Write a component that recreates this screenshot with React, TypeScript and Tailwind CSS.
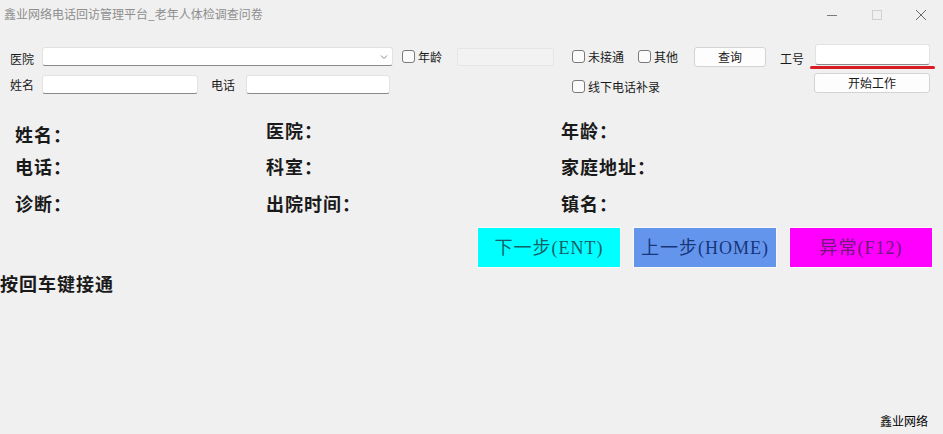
import React from "react";

const ui = { fontFamily: '"Noto Sans CJK SC", "Noto Sans", sans-serif' };
const serif = { fontFamily: '"Liberation Serif", "Noto Sans CJK SC", serif' };

function Check() {
  return <div className="w-[13px] h-[13px] shrink-0 rounded-[3px] border border-[#7a7a7a] bg-[#fbfbfb]" />;
}

function Input({ w }: { w: string }) {
  return (
    <div className={`${w} h-[19px] shrink-0 rounded-[3px] border border-[#e2e2e2] border-b-[#8a8a8a] bg-white`} />
  );
}

export default function App() {
  return (
    <div className="w-[943px] h-[434px] bg-[#f0f0f0] flex flex-col overflow-hidden text-[#1a1a1a]" style={ui}>
      {/* title bar */}
      <div className="h-[30px] flex items-center shrink-0">
        <div className="pl-[4px] text-[12px] text-[#8e8e8e] leading-none pb-[2px]">鑫业网络电话回访管理平台_老年人体检调查问卷</div>
        <div className="ml-auto flex items-center">
          <div className="w-[45px] h-[30px] flex items-center justify-center">
            <svg width="12" height="12" viewBox="0 0 12 12"><path d="M1 6.5h10" stroke="#7a7a7a" strokeWidth="1" /></svg>
          </div>
          <div className="w-[45px] h-[30px] flex items-center justify-center">
            <svg width="12" height="12" viewBox="0 0 12 12"><rect x="1.5" y="1.5" width="9" height="9" fill="none" stroke="#d0d0d0" strokeWidth="1" /></svg>
          </div>
          <div className="w-[44px] h-[30px] flex items-center justify-center">
            <svg width="12" height="12" viewBox="0 0 12 12"><path d="M1 1l10 10M11 1L1 11" stroke="#6a6a6a" strokeWidth="1" /></svg>
          </div>
        </div>
      </div>

      {/* row 1 */}
      <div className="mt-[14px] h-[24px] flex items-start text-[12px] leading-none shrink-0">
        <div className="w-[42px] pl-[10px] mt-[9px]">医院</div>
        <div className="w-[351px] h-[19px] mt-[3px] shrink-0 rounded-[3px] border border-[#e2e2e2] border-b-[#8a8a8a] bg-white flex items-center justify-end pr-[3px]">
          <svg width="10" height="10" viewBox="0 0 10 10"><path d="M2 3.5l3 3 3-3" fill="none" stroke="#8a8a8a" strokeWidth="1" /></svg>
        </div>
        <div className="ml-[9px] mt-[6px] flex items-center gap-[3px]"><Check /><span>年龄</span></div>
        <div className="ml-[15px] mt-[4px] w-[97px] h-[18px] shrink-0 rounded-[2px] border border-[#e6e6e6] bg-[#f2f2f2]" />
        <div className="ml-[18px] mt-[6px] flex items-center gap-[3px]"><Check /><span>未接通</span></div>
        <div className="ml-[14px] mt-[6px] flex items-center gap-[3px]"><Check /><span>其他</span></div>
        <div className="ml-[16px] mt-[3px] w-[72px] h-[20px] shrink-0 rounded-[3px] border border-[#d3d3d3] bg-[#fdfdfd] flex items-center justify-center">查询</div>
        <div className="ml-[14px] mt-[9px] w-[35px]">工号</div>
        <div className="w-[115px] flex flex-col items-start">
          <div className="w-[115px] h-[21px] shrink-0 rounded-[3px] border border-[#e2e2e2] border-b-[#8a8a8a] bg-white" />
          <div className="w-[125px] h-[3px] mt-[1px] -ml-[5px] rounded-full bg-[#d81e24]" />
        </div>
      </div>

      {/* row 2 */}
      <div className="mt-[5px] h-[20px] flex items-start text-[12px] leading-none shrink-0">
        <div className="w-[42px] pl-[10px] mt-[6px]">姓名</div>
        <div className="mt-[2px]"><Input w="w-[156px]" /></div>
        <div className="ml-[13px] w-[35px] mt-[6px]">电话</div>
        <div className="mt-[2px]"><Input w="w-[144px]" /></div>
        <div className="ml-[182px] mt-[7px] flex items-center gap-[3px]"><Check /><span>线下电话补录</span></div>
        <div className="ml-[154px] w-[116px] h-[20px] shrink-0 rounded-[3px] border border-[#d3d3d3] bg-[#fdfdfd] flex items-center justify-center">开始工作</div>
      </div>

      {/* info grid */}
      <div className="mt-[27px] grid grid-cols-[251px_295px_1fr] items-start gap-y-[12px] pl-[15px] text-[18px] font-bold leading-[24px] tracking-[1px] shrink-0" style={serif}>
        <div className="translate-y-[4px]">姓名：</div>
        <div>医院：</div>
        <div>年龄：</div>
        <div>电话：</div>
        <div>科室：</div>
        <div>家庭地址：</div>
        <div className="mt-[1px]">诊断：</div>
        <div className="mt-[1px]">出院时间：</div>
        <div className="mt-[1px]">镇名：</div>
      </div>

      {/* buttons */}
      <div className="mt-[10px] pl-[477px] flex gap-[12px] shrink-0 text-[18px] leading-none tracking-[1px]" style={serif}>
        <div className="w-[144px] h-[41px] border border-[#fafafa] bg-[#00ffff] text-[#136068] flex items-center justify-center">下一步(ENT)</div>
        <div className="w-[144px] h-[41px] border border-[#fafafa] bg-[#6495ed] text-[#18367a] flex items-center justify-center">上一步(HOME)</div>
        <div className="w-[144px] h-[41px] border border-[#fafafa] bg-[#ff00ff] text-[#6e1a7a] flex items-center justify-center">异常(F12)</div>
      </div>

      <div className="mt-[5px] text-[18px] font-bold leading-[24px] tracking-[1px] shrink-0" style={serif}>按回车键接通</div>

      <div className="mt-auto mb-[7px] flex justify-end pr-[15px] text-[12px] text-black leading-none">鑫业网络</div>
    </div>
  );
}
